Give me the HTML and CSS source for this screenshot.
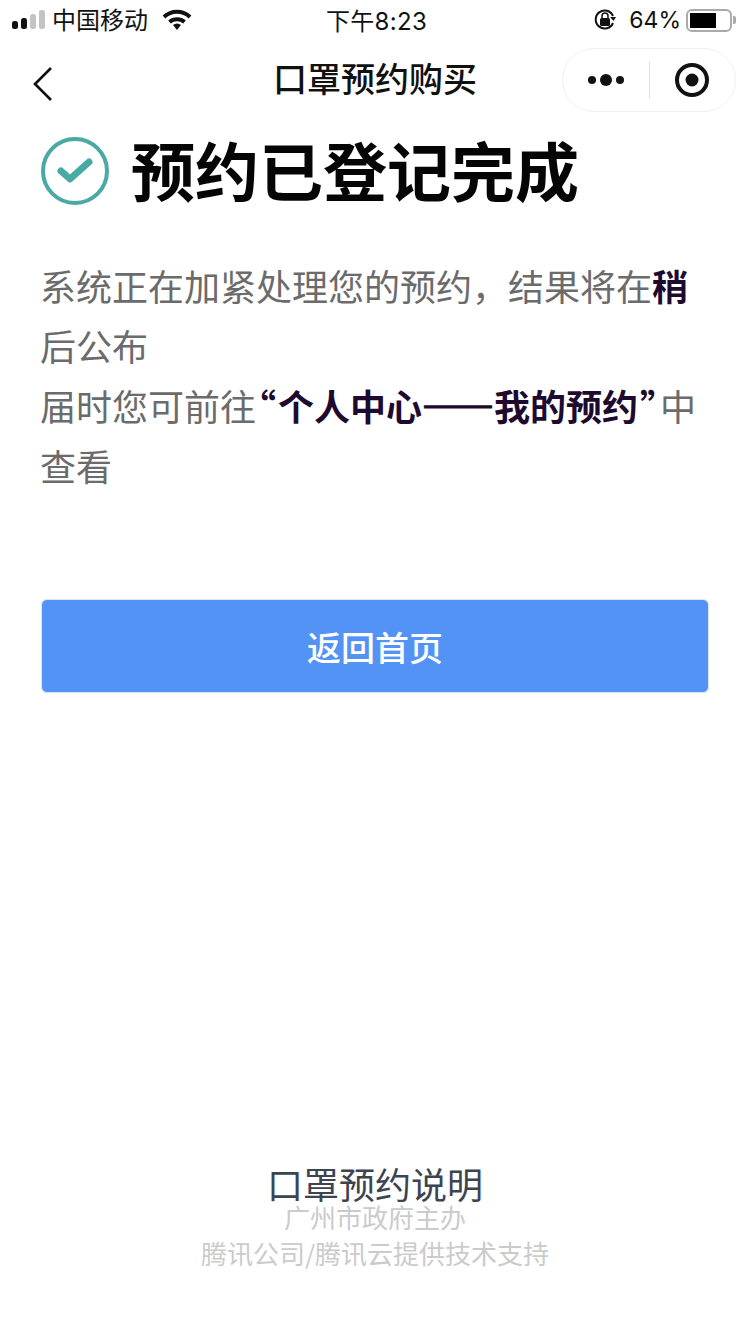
FILE: index.html
```html
<!DOCTYPE html>
<html lang="zh-CN">
<head>
  <meta charset="UTF-8">
  <title>口罩预约购买</title>
  <link rel="stylesheet" href="styles.css">
</head>
<body>
  <div class="page">

    <!-- Status bar -->
    <div class="status">
      <div class="status-left">
        <svg class="signal" width="34" height="20" viewBox="0 0 34 20">
          <rect x="0" y="11" width="6" height="8" rx="2.5" fill="#111"/>
          <rect x="9" y="8" width="6" height="11" rx="2.5" fill="#111"/>
          <rect x="18" y="4" width="6" height="15" rx="2.5" fill="#c4c4c4"/>
          <rect x="27" y="0" width="6" height="19" rx="2.5" fill="#c4c4c4"/>
        </svg>
        <span class="carrier">中国移动</span>
        <svg class="wifi" width="30" height="22" viewBox="0 0 30 22">
          <path d="M2 8 A19 19 0 0 1 28 8" fill="none" stroke="#111" stroke-width="4"/>
          <path d="M7.5 13 A11.5 11.5 0 0 1 22.5 13" fill="none" stroke="#111" stroke-width="4"/>
          <path d="M11 16 A6 6 0 0 1 19 16 L15 21 Z" fill="#111"/>
        </svg>
      </div>
      <div class="status-time">下午8:23</div>
      <div class="status-right">
        <svg class="lock" width="24" height="24" viewBox="0 0 24 24">
          <path d="M20 15 A9 9 0 1 1 20 8" fill="none" stroke="#111" stroke-width="2"/>
          <path d="M17 9 L23 9 L20.5 13 Z" fill="#111"/>
          <rect x="7" y="10" width="10" height="8" rx="1.5" fill="#111"/>
          <path d="M9 10 V8 A3 3 0 0 1 15 8 V10" fill="none" stroke="#111" stroke-width="1.5"/>
        </svg>
        <span class="percent">64%</span>
        <div class="battery"><div class="battery-level"></div></div>
        <div class="battery-tip"></div>
      </div>
    </div>

    <!-- Nav -->
    <div class="nav">
      <svg class="back" width="22" height="36" viewBox="0 0 22 36">
        <path d="M19 2 L3 18 L19 34" fill="none" stroke="#111" stroke-width="2.6"/>
      </svg>
      <h1 class="nav-title">口罩预约购买</h1>
      <div class="capsule">
        <div class="capsule-btn">
          <svg width="38" height="14" viewBox="0 0 38 14">
            <circle cx="5" cy="7" r="4" fill="#111"/>
            <circle cx="19" cy="7" r="6" fill="#111"/>
            <circle cx="33" cy="7" r="4" fill="#111"/>
          </svg>
        </div>
        <div class="capsule-line"></div>
        <div class="capsule-btn">
          <svg width="36" height="36" viewBox="0 0 36 36">
            <circle cx="18" cy="18" r="15" fill="none" stroke="#111" stroke-width="4"/>
            <circle cx="18" cy="18" r="6.5" fill="#111"/>
          </svg>
        </div>
      </div>
    </div>

    <!-- Result -->
    <div class="result">
      <div class="result-head">
        <svg class="check" width="68" height="68" viewBox="0 0 68 68">
          <circle cx="34" cy="34" r="32" fill="none" stroke="#49a9a3" stroke-width="4"/>
          <path d="M20 34 L29 42 L48 25" fill="none" stroke="#49a9a3" stroke-width="7" stroke-linecap="round" stroke-linejoin="round"/>
        </svg>
        <h2 class="result-title">预约已登记完成</h2>
      </div>
      <p class="result-text">系统正在加紧处理您的预约，结果将在<b>稍</b>后公布<br>届时您可前往<b><span class="quote">“</span>个人中心<span class="dash">——</span>我的预约<span class="quote">”</span></b>中查看</p>
      <button class="home-btn">返回首页</button>
    </div>

    <!-- Footer -->
    <div class="footer">
      <div class="footer-link">口罩预约说明</div>
      <div class="footer-note">广州市政府主办</div>
      <div class="footer-note">腾讯公司/腾讯云提供技术支持</div>
    </div>

  </div>
</body>
</html>
```

FILE: styles.css
```css
* { box-sizing: border-box; }
body { margin: 0; background: #fff; font-family: "Noto Sans CJK SC", "Noto Sans", sans-serif; }
h1, h2, p { margin: 0; }

.page {
  height: 1334px;
  display: flex;
  flex-direction: column;
  overflow: hidden;
}

.status {
  height: 44px;
  padding: 0 12px 4px;
  display: flex;
  align-items: center;
  justify-content: space-between;
  color: #111;
}
.status-left, .status-right { width: 260px; display: flex; align-items: center; }
.status-right { justify-content: flex-end; }
.carrier { margin: 0 0 3px 6px; font-size: 24px; }
.wifi { margin-left: 14px; }
.status-time { margin: 0 0 2px 3px; font-size: 24px; letter-spacing: 0.3px; font-family: Inter, "Noto Sans CJK SC", sans-serif; }
.percent { margin: 0 5px 0 12px; font-size: 23px; font-family: Inter, sans-serif; }
.battery {
  width: 46px;
  height: 23px;
  padding: 2px;
  border: 2px solid #aaa;
  border-radius: 6px;
}
.battery-level { width: 26px; height: 100%; background: #000; }
.battery-tip { width: 3px; height: 8px; margin: 0 2px 0 1px; background: #aaa; border-radius: 0 2px 2px 0; }

.nav {
  position: relative;
  height: 72px;
  padding: 0 14px 0 32px;
  display: flex;
  align-items: center;
  justify-content: space-between;
}
.back { margin-top: 8px; }
.nav-title {
  position: absolute;
  left: 0;
  right: 0;
  padding-bottom: 6px;
  text-align: center;
  font-size: 34px;
  font-weight: 500;
  color: #111;
}
.capsule {
  width: 174px;
  height: 64px;
  display: flex;
  align-items: center;
  border: 1px solid #f0f0f0;
  border-radius: 32px;
  background: #fff;
}
.capsule-btn { flex: 1; display: flex; align-items: center; justify-content: center; }
.capsule-line { width: 1px; height: 38px; background: #e2e2e2; }

.result { padding: 20px 41px 0; }
.result-head { display: flex; align-items: center; height: 70px; }
.check { flex: none; }
.result-title {
  margin: 0 0 6px 22px;
  font-size: 64px;
  font-weight: 700;
  color: #050505;
  white-space: nowrap;
}
.result-text {
  margin: 49px 0 0 -1px;
  font-size: 36px;
  line-height: 60px;
  color: #6b6b6b;
}
.result-text b { font-weight: 700; color: #1d0a2e; }
.quote { font-feature-settings: "palt"; padding: 0 2px; }
.dash { -webkit-text-stroke: 1.5px #1d0a2e; }

.home-btn {
  width: 100%;
  height: 94px;
  margin-top: 104px;
  border: 1px solid #d6e5fb;
  border-radius: 6px;
  background: #5293f5;
  color: #fff;
  font-family: inherit;
  font-size: 34px;
  font-weight: 500;
}

.footer { margin-top: auto; padding-bottom: 63px; text-align: center; }
.footer-link { height: 32px; line-height: 32px; font-size: 36px; color: #3d4450; }
.footer-note { height: 36px; line-height: 36px; font-size: 26px; color: #cbcbcb; }
```
